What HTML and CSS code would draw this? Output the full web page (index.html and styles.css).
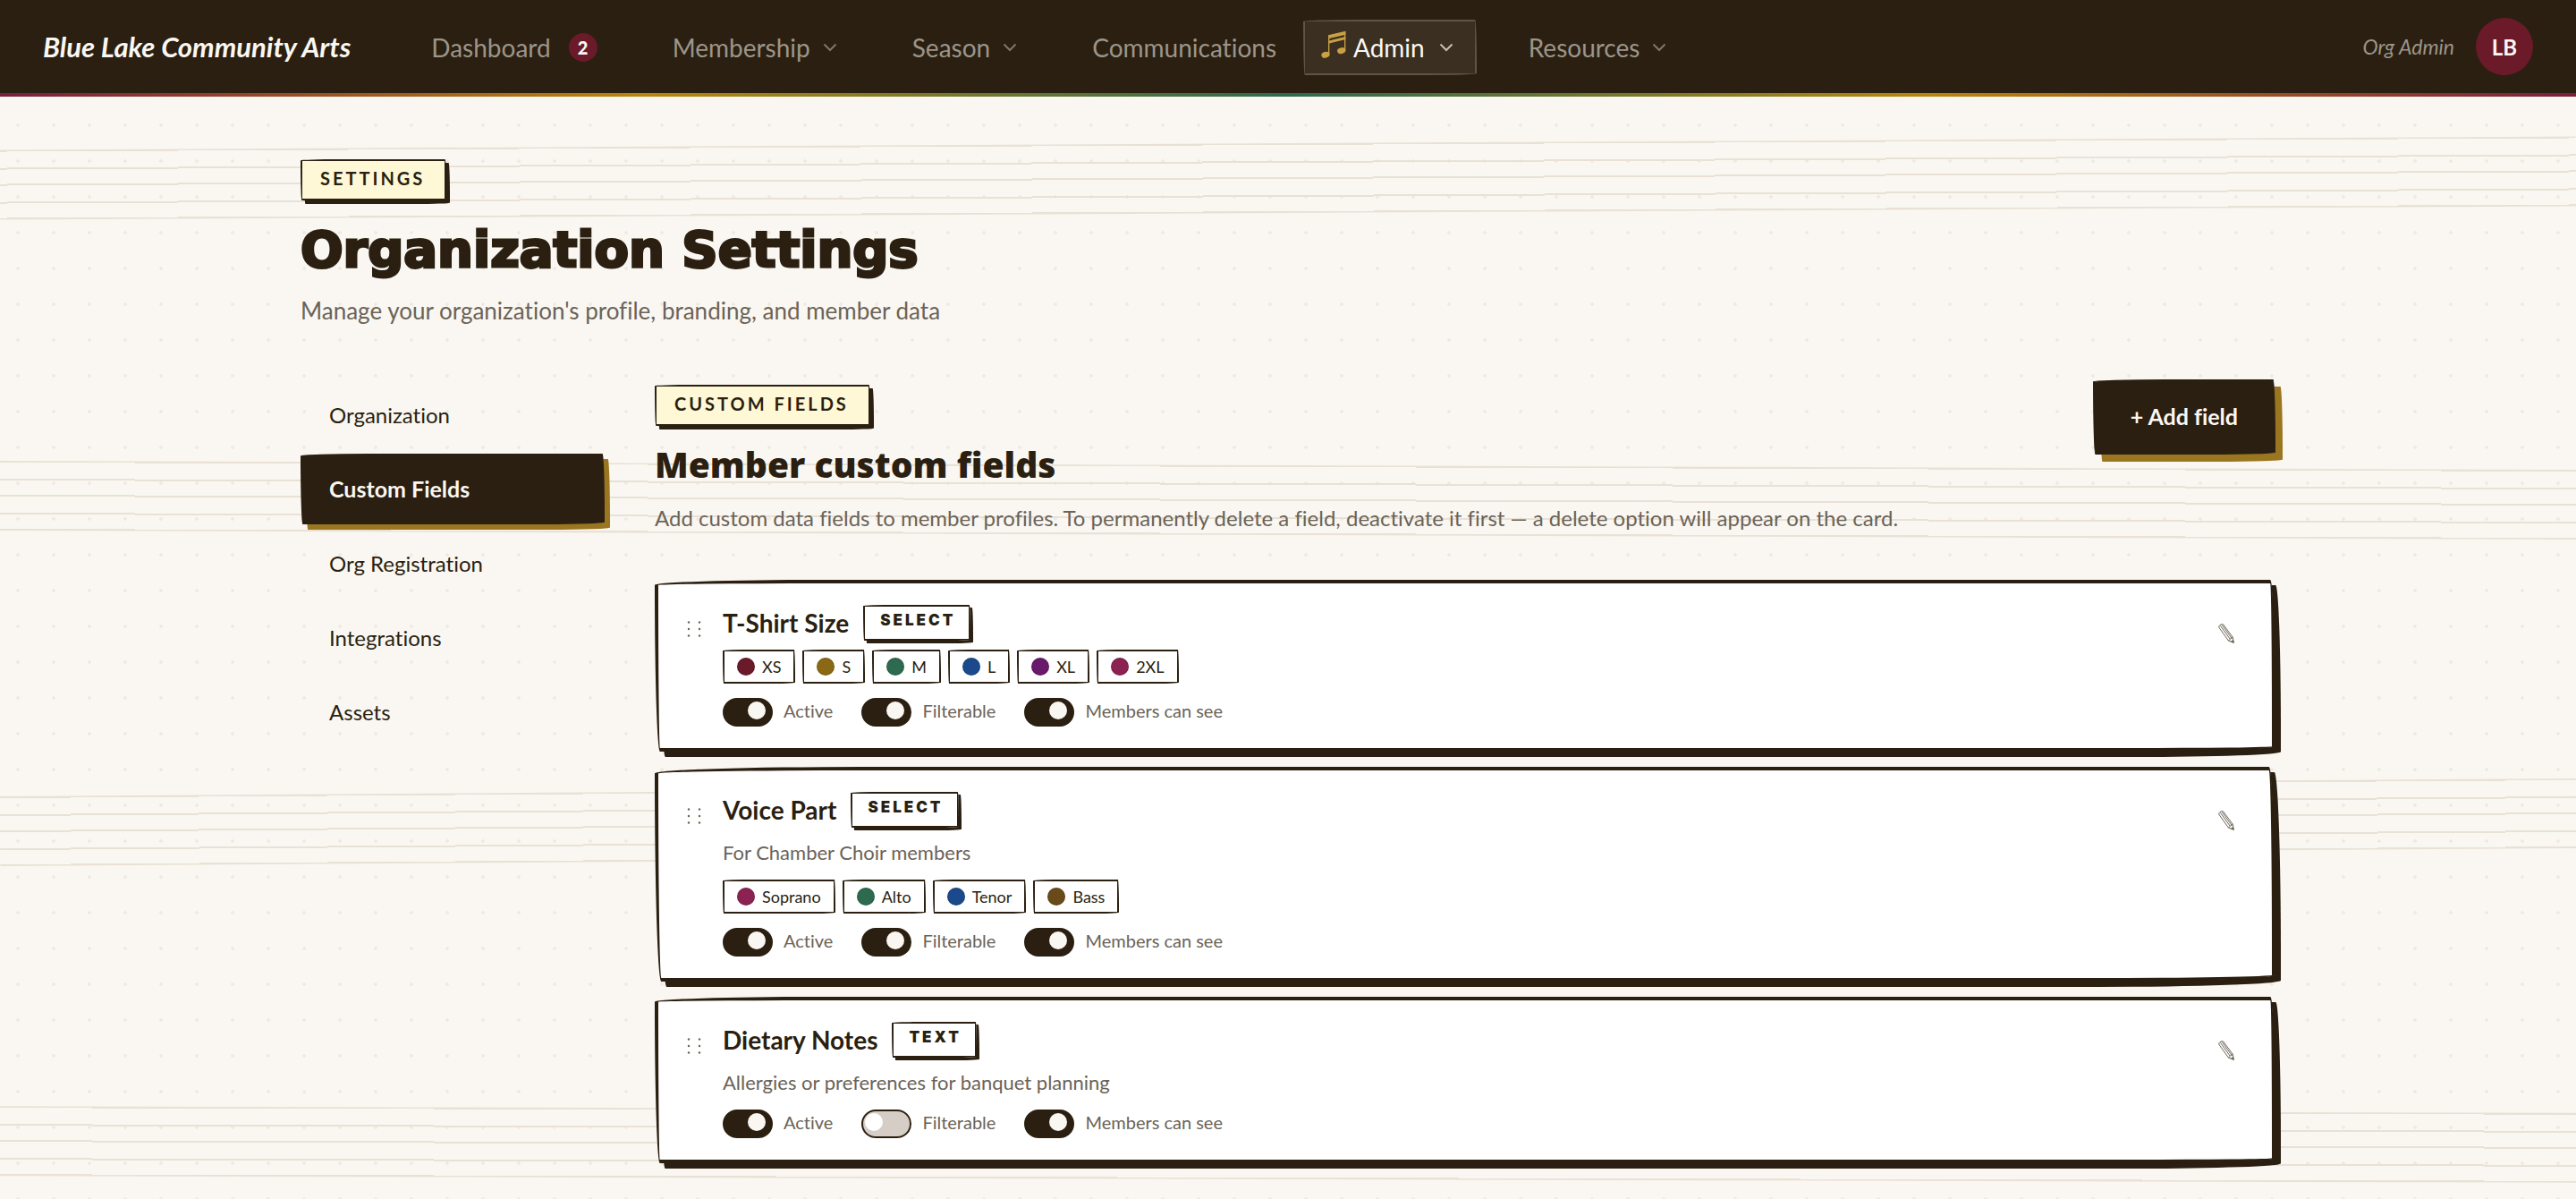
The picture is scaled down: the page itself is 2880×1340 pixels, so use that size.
FILE: index.html
```html
<!DOCTYPE html>
<html lang="en">
<head>
<meta charset="utf-8">
<meta name="viewport" content="width=device-width, initial-scale=1">
<title>Organization Settings – Blue Lake Community Arts</title>
<link rel="stylesheet" href="styles.css">
</head>
<body>
<svg class="sprite" aria-hidden="true">
  <symbol id="chevron" viewBox="0 0 16 10"><path d="M1.5 1.5 8 8l6.500-6.500" fill="none" stroke="currentColor" stroke-width="2"/></symbol>
  <symbol id="grip" viewBox="0 0 16 18"><g fill="currentColor"><circle cx="2" cy="1.500" r="1.200"/><circle cx="14" cy="1.500" r="1.200"/><circle cx="2" cy="9" r="1.200"/><circle cx="14" cy="9" r="1.200"/><circle cx="2" cy="16.500" r="1.200"/><circle cx="14" cy="16.500" r="1.200"/></g></symbol>
  <symbol id="pencil" viewBox="0 0 18 22"><path d="M.8 4.200Q.5 2.800 2 1.500 4.200.2 5.600.9L16.300 15.300l.9 5.900-5.800-2.200zM2.600 2.600 13.300 17.300M4.200 1.500 15 16.200M11.400 19l2-1.700 1.600-1.100 1.300-.9" fill="none" stroke="currentColor" stroke-width="1"/><path d="M17.800 22l-.9-4.300-3.300 2.600z" fill="currentColor"/></symbol>
</svg>

<div class="backdrop" aria-hidden="true">
  <div class="staff staff-a"></div>
  <div class="staff staff-b"></div>
  <div class="staff staff-c"></div>
  <div class="staff staff-d"></div>
</div>

<header class="topbar">
  <a class="brand" href="#">Blue Lake Community Arts</a>
  <nav class="nav" aria-label="Main">
    <a class="nav-item" href="#">Dashboard <span class="count">2</span></a>
    <a class="nav-item" href="#">Membership <svg class="chevron"><use href="#chevron"/></svg></a>
    <a class="nav-item" href="#">Season <svg class="chevron"><use href="#chevron"/></svg></a>
    <a class="nav-item" href="#">Communications</a>
    <a class="nav-item is-current" href="#" aria-current="page"><svg class="note" viewBox="0 0 84 96" aria-hidden="true"><g fill="currentColor"><path d="M24 16 82 2v12L24 28zM24 35 82 21v9L24 44z"/><path d="M24 16h4v66h-4zM78 4h4v64h-4z"/><ellipse cx="15" cy="82" rx="14" ry="10" transform="rotate(-15 15 82)"/><ellipse cx="68" cy="68" rx="14" ry="10" transform="rotate(-15 68 68)"/></g></svg>Admin <svg class="chevron"><use href="#chevron"/></svg></a>
    <a class="nav-item" href="#">Resources <svg class="chevron"><use href="#chevron"/></svg></a>
  </nav>
  <span class="role">Org Admin</span>
  <button class="avatar" type="button" aria-label="Account">LB</button>
</header>

<main class="page">
  <span class="tag">SETTINGS</span>
  <h1 class="page-title">Organization Settings</h1>
  <p class="page-intro">Manage your organization's profile, branding, and member data</p>

  <div class="layout">
    <nav class="side" aria-label="Settings">
      <a class="side-item" href="#">Organization</a>
      <a class="side-item is-active" href="#" aria-current="page">Custom Fields</a>
      <a class="side-item" href="#">Org Registration</a>
      <a class="side-item" href="#">Integrations</a>
      <a class="side-item" href="#">Assets</a>
    </nav>

    <section class="panel">
      <div class="panel-head">
        <div class="panel-text">
          <span class="tag">CUSTOM FIELDS</span>
          <h2 class="panel-title">Member custom fields</h2>
          <p class="panel-intro">Add custom data fields to member profiles. To permanently delete a field, deactivate it first — a delete option will appear on the card.</p>
        </div>
        <button class="add" type="button">+ Add field</button>
      </div>

      <div class="cards">
        <article class="card">
          <svg class="grip"><use href="#grip"/></svg>
          <div class="card-body">
            <div class="card-head"><h3 class="card-title">T-Shirt Size</h3><span class="kind">SELECT</span></div>
            <ul class="chips">
              <li class="chip"><i class="dot maroon"></i>XS</li>
              <li class="chip"><i class="dot gold"></i>S</li>
              <li class="chip"><i class="dot green"></i>M</li>
              <li class="chip"><i class="dot blue"></i>L</li>
              <li class="chip"><i class="dot purple"></i>XL</li>
              <li class="chip"><i class="dot rose"></i>2XL</li>
            </ul>
            <div class="toggles">
              <label class="toggle"><input class="switch" type="checkbox" checked>Active</label>
              <label class="toggle"><input class="switch" type="checkbox" checked>Filterable</label>
              <label class="toggle"><input class="switch" type="checkbox" checked>Members can see</label>
            </div>
          </div>
          <button class="edit" type="button" aria-label="Edit T-Shirt Size"><svg class="pencil"><use href="#pencil"/></svg></button>
        </article>

        <article class="card">
          <svg class="grip"><use href="#grip"/></svg>
          <div class="card-body">
            <div class="card-head"><h3 class="card-title">Voice Part</h3><span class="kind">SELECT</span></div>
            <p class="card-note">For Chamber Choir members</p>
            <ul class="chips">
              <li class="chip"><i class="dot rose"></i>Soprano</li>
              <li class="chip"><i class="dot green"></i>Alto</li>
              <li class="chip"><i class="dot blue"></i>Tenor</li>
              <li class="chip"><i class="dot brown"></i>Bass</li>
            </ul>
            <div class="toggles">
              <label class="toggle"><input class="switch" type="checkbox" checked>Active</label>
              <label class="toggle"><input class="switch" type="checkbox" checked>Filterable</label>
              <label class="toggle"><input class="switch" type="checkbox" checked>Members can see</label>
            </div>
          </div>
          <button class="edit" type="button" aria-label="Edit Voice Part"><svg class="pencil"><use href="#pencil"/></svg></button>
        </article>

        <article class="card">
          <svg class="grip"><use href="#grip"/></svg>
          <div class="card-body">
            <div class="card-head"><h3 class="card-title">Dietary Notes</h3><span class="kind">TEXT</span></div>
            <p class="card-note">Allergies or preferences for banquet planning</p>
            <div class="toggles">
              <label class="toggle"><input class="switch" type="checkbox" checked>Active</label>
              <label class="toggle"><input class="switch" type="checkbox">Filterable</label>
              <label class="toggle"><input class="switch" type="checkbox" checked>Members can see</label>
            </div>
          </div>
          <button class="edit" type="button" aria-label="Edit Dietary Notes"><svg class="pencil"><use href="#pencil"/></svg></button>
        </article>
      </div>
    </section>
  </div>
</main>
</body>
</html>
```
FILE: styles.css
```css
:root {
  --ink: #2a1f10;
  --paper: #faf7f2;
  --muted: #6b6357;
  --maroon: #6b1a2a;
  --gold: #9a7620;
  --sketch: 510px 16px 450px 16px / 16px 450px 16px 510px;
}

* { box-sizing: border-box; }

body {
  margin: 0;
  min-height: 100vh;
  position: relative;
  background: var(--paper);
  color: var(--ink);
  font-family: Lato, "Liberation Sans", sans-serif;
  font-size: 24px;
  font-variant-ligatures: none;
}

h1, h2, h3, p, ul { margin: 0; padding: 0; }
a { color: inherit; text-decoration: none; }
button, input { font: inherit; margin: 0; }
.sprite { display: none; }

/* Dotted paper with slightly tilted music staves */
.backdrop {
  position: absolute;
  inset: 0;
  z-index: -1;
  overflow: hidden;
  padding-top: 160px;
  display: flex;
  flex-direction: column;
  gap: 282px;
  background: radial-gradient(circle, #efebe2 2px, transparent 2px) 0 0 / 40px 40px;
}
.staff {
  flex: none;
  height: 78px;
  background: linear-gradient(#e9e1d6 2px, transparent 2px 20px, #e9e1d6 20px 22px, transparent 22px 38px, #e9e1d6 38px 40px, transparent 40px 58px, #e9e1d6 58px 60px, transparent 60px 76px, #e9e1d6 76px);
}
.staff-a { transform: rotate(-0.3deg); }
.staff-b { transform: rotate(0.2deg); }
.staff-c { transform: rotate(-0.4deg); }
.staff-d { transform: rotate(0.15deg); }

/* Top bar */
.topbar {
  display: flex;
  align-items: center;
  padding: 0 48px;
  height: 108px;
  color: var(--paper);
  border-bottom: 4px solid;
  border-image: linear-gradient(90deg, #7b1e3f, #b8860b 25%, #2d6a4f 50%, #b8860b 75%, #7b1e3f) 1;
  background: var(--ink);
}
.brand {
  font-size: 31px;
  font-style: italic;
  font-weight: 700;
  white-space: nowrap;
}
.nav {
  display: flex;
  gap: 4px;
  margin: 2px 0 0 36px;
}
.nav-item {
  display: flex;
  align-items: center;
  gap: 14px;
  height: 62px;
  padding: 0 24px 0 52px;
  border: 2px solid transparent;
  border-radius: var(--sketch);
  font-size: 28px;
  color: #9c9589;
}
.nav-item.is-current {
  gap: 8px;
  padding-left: 18px;
  color: var(--paper);
  background: #3b2f22;
  border-color: #5f5447;
}
.is-current .chevron { margin-left: 8px; color: #c4beb4; }
.chevron { width: 16px; height: 10px; color: #7f776b; }
.note { width: 28px; height: 32px; margin-bottom: 6px; color: #c9a044; }
.count {
  width: 32px;
  margin-left: 6px;
  border-radius: 50%;
  background: var(--maroon);
  color: var(--paper);
  font-size: 20px;
  font-weight: 900;
  line-height: 32px;
  text-align: center;
}
.role {
  margin-left: auto;
  font-size: 23px;
  font-style: italic;
  color: #9c9589;
}
.avatar {
  width: 64px;
  height: 64px;
  margin-left: 24px;
  padding: 0;
  border: 0;
  border-radius: 50%;
  background: var(--maroon);
  color: var(--paper);
  font-size: 24px;
  font-weight: 700;
}

/* Page heading */
.page {
  max-width: 2304px;
  margin: 0 auto;
  padding: 70px 48px 32px;
}
.tag {
  display: block;
  width: fit-content;
  padding: 7px 22px 11px 20px;
  border: 2px solid var(--ink);
  border-radius: var(--sketch);
  background: #fff8d6;
  box-shadow: 4px 4px 0 var(--ink);
  font-size: 20px;
  font-weight: 700;
  line-height: 24px;
  letter-spacing: 3px;
}
.page-title {
  margin: 21px 0 13px;
  font-family: "DejaVu Sans", sans-serif;
  font-size: 56px;
  font-weight: 700;
  line-height: 68px;
  -webkit-text-stroke: 3px var(--ink);
}
.page-intro {
  font-size: 26px;
  line-height: 42px;
  color: var(--muted);
}

.layout {
  display: grid;
  grid-template-columns: 340px minmax(0, 1fr);
  gap: 56px;
  margin-top: 56px;
}

/* Settings sections */
.side {
  display: flex;
  flex-direction: column;
  gap: 4px;
}
.side-item {
  padding: 0 32px;
  line-height: 79px;
}
.side-item.is-active {
  border-radius: var(--sketch);
  background: var(--ink);
  box-shadow: 6px 6px 0 var(--gold);
  color: var(--paper);
  font-size: 25px;
  font-weight: 700;
}

/* Custom fields panel */
.panel-head {
  display: flex;
  justify-content: space-between;
  align-items: flex-start;
  margin-bottom: 49px;
}
.panel-text { padding-top: 6px; }
.panel-title {
  margin: 17px 0 14px;
  font-family: "Open Sans", sans-serif;
  font-size: 39px;
  font-weight: 800;
  line-height: 52px;
}
.panel-intro {
  line-height: 40px;
  color: var(--muted);
}
.add {
  flex: none;
  height: 84px;
  padding: 0 40px 2px;
  border: 2px solid var(--ink);
  border-radius: var(--sketch);
  background: var(--ink);
  box-shadow: 8px 8px 0 var(--gold);
  color: var(--paper);
  font-size: 25px;
  font-weight: 700;
}

.cards {
  display: flex;
  flex-direction: column;
  gap: 17px;
}
.card {
  display: flex;
  align-items: flex-start;
  padding: 24px 32px;
  border: 4px solid var(--ink);
  border-radius: var(--sketch);
  background: #fff;
  box-shadow: 6px 6px 0 var(--ink);
}
.grip {
  width: 16px;
  height: 18px;
  margin: 18px 24px 0 0;
  color: var(--muted);
}
.card-body { flex: 1; }
.card-head {
  display: flex;
  align-items: flex-start;
  gap: 16px;
  min-height: 42px;
  margin-bottom: 8px;
}
.card-title {
  font-size: 28px;
  font-weight: 700;
  line-height: 40px;
}
.kind {
  padding: 4px 15px 10px 17px;
  border: 2px solid var(--ink);
  border-radius: var(--sketch);
  box-shadow: 3px 3px 0 var(--ink);
  font-family: Inter, sans-serif;
  font-size: 17px;
  font-weight: 900;
  line-height: 22px;
  letter-spacing: 3px;
}
.card-note {
  margin-bottom: 12px;
  font-size: 22px;
  line-height: 36px;
  color: var(--muted);
}
.chips {
  display: flex;
  flex-wrap: wrap;
  gap: 8px;
  margin-bottom: 16px;
  list-style: none;
}
.chip {
  display: flex;
  align-items: center;
  gap: 8px;
  padding: 0 14px;
  border: 2px solid var(--ink);
  border-radius: var(--sketch);
  font-size: 18px;
  line-height: 34px;
}
.dot {
  width: 20px;
  height: 20px;
  border: 1px solid rgba(0, 0, 0, 0.15);
  border-radius: 50%;
}
.maroon { background-color: #6b1a2a; }
.gold { background-color: #8b6914; }
.green { background-color: #2d6a4f; }
.blue { background-color: #1a4a8b; }
.purple { background-color: #6a1a6b; }
.rose { background-color: #8b2252; }
.brown { background-color: #6b4a1a; }

.toggles {
  display: flex;
  flex-wrap: wrap;
  gap: 32px;
}
.toggle {
  display: flex;
  align-items: flex-start;
  gap: 12px;
  font-size: 20px;
  line-height: 28px;
  color: var(--muted);
}
.switch {
  appearance: none;
  width: 56px;
  height: 32px;
  padding: 2px;
  border: 2px solid var(--ink);
  border-radius: 16px;
  background: #d6cdc6;
}
.switch::before {
  content: "";
  display: block;
  width: 20px;
  height: 20px;
  border-radius: 50%;
  background: #fff;
}
.switch:checked { background: var(--ink); }
.switch:checked::before {
  margin-left: 24px;
  background: var(--paper);
}
.edit {
  display: grid;
  place-items: center;
  width: 38px;
  height: 44px;
  margin-top: 10px;
  padding: 0;
  border: 0;
  background: none;
  color: var(--muted);
}
.pencil { width: 18px; height: 22px; }
```
